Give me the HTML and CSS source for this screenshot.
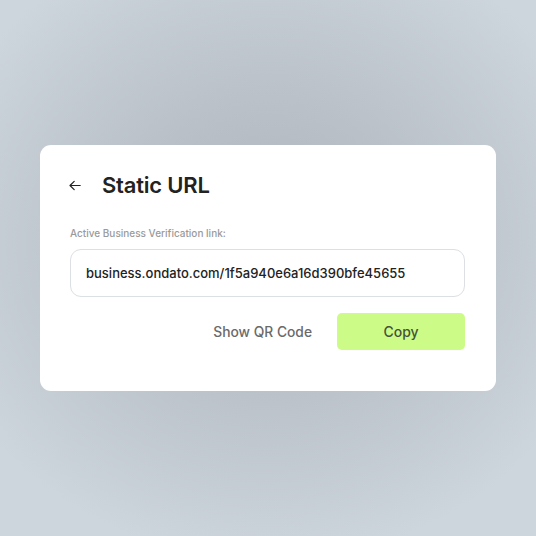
FILE: index.html
```html
<!DOCTYPE html>
<html>
<head>
<meta charset="utf-8">
<link rel="stylesheet" href="styles.css">
</head>
<body>
<div class="stage">
  <div class="card">
    <div class="header">
      <svg class="back" width="12" height="11" viewBox="0 0 12 11" fill="none" stroke="#222" stroke-width="1.2" stroke-linecap="round" stroke-linejoin="round"><path d="M11.2 5.5H1M5.2 1.3L1 5.5l4.2 4.2"/></svg>
      <h1 class="title">Static URL</h1>
    </div>
    <div class="label">Active Business Verification link:</div>
    <div class="field">business.ondato.com/1f5a940e6a16d390bfe45655</div>
    <div class="actions">
      <button class="btn-ghost">Show QR Code</button>
      <button class="btn-copy">Copy</button>
    </div>
  </div>
</div>
</body>
</html>
```

FILE: styles.css
```css
html, body {
  margin: 0;
  padding: 0;
}
body {
  width: 536px;
  height: 536px;
  overflow: hidden;
  font-family: Inter, "Noto Sans", sans-serif;
  background: radial-gradient(ellipse 65% 60% at 50% 45%, #adb4bc 0%, #bac1c8 45%, #cdd5dd 100%);
}
.stage {
  width: 536px;
  height: 536px;
  display: flex;
  align-items: center;
  justify-content: center;
}
.card {
  width: 456px;
  height: 246px;
  box-sizing: border-box;
  background: #fff;
  border-radius: 11px;
  padding: 26px 31px 0 30px;
}
.header {
  display: flex;
  align-items: center;
  height: 28px;
}
.back {
  margin-left: -1px;
  margin-right: 21px;
}
.title {
  margin: 0;
  font-size: 22px;
  font-weight: 600;
  color: #222;
  line-height: 28px;
  letter-spacing: -0.2px;
}
.label {
  margin-top: 27px;
  font-size: 10px;
  font-weight: 500;
  color: #9a9a9a;
  line-height: 14px;
}
.field {
  margin-top: 9px;
  height: 48px;
  box-sizing: border-box;
  border: 1px solid #dcdfe3;
  border-radius: 11px;
  padding: 0 15px;
  display: flex;
  align-items: center;
  font-size: 13px;
  font-weight: 500;
  color: #222;
}
.actions {
  margin-top: 16px;
  display: flex;
  justify-content: flex-end;
  align-items: center;
  gap: 25px;
}
.btn-ghost {
  border: none;
  background: none;
  padding: 0;
  font-family: inherit;
  font-size: 13.8px;
  font-weight: 500;
  color: #6a6a6a;
}
.btn-copy {
  width: 128px;
  height: 37px;
  border: none;
  border-radius: 5px;
  background: #ccfb88;
  font-family: inherit;
  font-size: 14px;
  font-weight: 500;
  color: #45523a;
}
```
